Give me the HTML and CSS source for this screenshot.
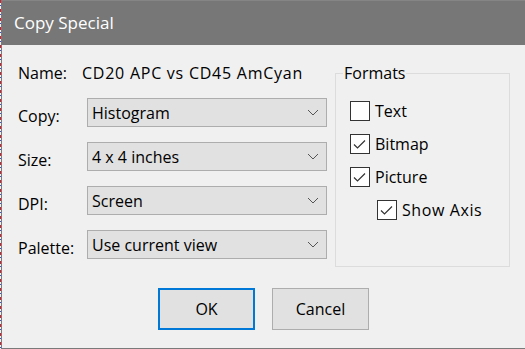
FILE: index.html
```html
<!DOCTYPE html>
<html lang="en">
<head>
    <meta charset="UTF-8">
    <title>Copy Special</title>
    <link rel="stylesheet" href="styles.css">
</head>
<body>
    <div class="dialog">
        <div class="titlebar">Copy Special</div>
        <div class="content">
            <div class="main">
                <div class="settings">
                    <div class="name-row">
                        <span class="name-label">Name:</span>
                        <span class="name-value">CD20 APC vs CD45 AmCyan</span>
                    </div>
                    <div class="field">
                        <span class="label">Copy:</span>
                        <div class="combo"><span>Histogram</span><svg class="chevron" width="12" height="7" viewBox="0 0 12 7"><polyline points="1,1 6,6 11,1"/></svg></div>
                    </div>
                    <div class="field">
                        <span class="label">Size:</span>
                        <div class="combo"><span>4 x 4 inches</span><svg class="chevron" width="12" height="7" viewBox="0 0 12 7"><polyline points="1,1 6,6 11,1"/></svg></div>
                    </div>
                    <div class="field">
                        <span class="label">DPI:</span>
                        <div class="combo"><span>Screen</span><svg class="chevron" width="12" height="7" viewBox="0 0 12 7"><polyline points="1,1 6,6 11,1"/></svg></div>
                    </div>
                    <div class="field">
                        <span class="label">Palette:</span>
                        <div class="combo"><span>Use current view</span><svg class="chevron" width="12" height="7" viewBox="0 0 12 7"><polyline points="1,1 6,6 11,1"/></svg></div>
                    </div>
                </div>
                <fieldset class="formats">
                    <legend>Formats</legend>
                    <div class="check"><span class="box"></span>Text</div>
                    <div class="check"><span class="box"><svg width="18" height="18" viewBox="0 0 18 18"><polyline points="3,9.5 6.5,13 14,5.5"/></svg></span>Bitmap</div>
                    <div class="check"><span class="box"><svg width="18" height="18" viewBox="0 0 18 18"><polyline points="3,9.5 6.5,13 14,5.5"/></svg></span>Picture</div>
                    <div class="check sub"><span class="box"><svg width="18" height="18" viewBox="0 0 18 18"><polyline points="3,9.5 6.5,13 14,5.5"/></svg></span><span class="wide">Show Axis</span></div>
                </fieldset>
            </div>
            <div class="buttons">
                <button class="btn default">OK</button>
                <button class="btn">Cancel</button>
            </div>
        </div>
    </div>
</body>
</html>
```

FILE: styles.css
```css
html, body { margin: 0; padding: 0; }
body {
    font-family: 'Open Sans', 'Noto Sans', sans-serif;
    font-size: 16px;
    color: #000;
    background: repeating-linear-gradient(180deg, #d81e2c 0 3px, #f0f0f0 3px 5px, #3a52c4 5px 6px, #f0f0f0 6px 9px);
    width: 525px;
    height: 349px;
    overflow: hidden;
}
.dialog {
    margin-left: 1px;
    width: 524px;
    height: 349px;
    box-sizing: border-box;
    border-left: 1px solid #7a7a7a;
    border-bottom: 1px solid #7a7a7a;
    background: #f0f0f0;
    display: flex;
    flex-direction: column;
}
.titlebar {
    height: 45px;
    flex: none;
    box-sizing: border-box;
    background: #777777;
    border-top: 1px solid #858585;
    color: #fff;
    font-size: 17px;
    line-height: 22px;
    padding: 11px 0 0 12px;
}
.content { padding: 18px 0 0 16px; }
.main { display: flex; align-items: flex-start; gap: 8px; }
.settings { display: flex; flex-direction: column; gap: 15px; width: 309px; }
.name-row { display: flex; line-height: 20px; height: 20px; }
.name-label { width: 64px; flex: none; }
.name-value { letter-spacing: 0.75px; white-space: nowrap; }
.field { display: flex; align-items: center; }
.label { width: 69px; flex: none; padding-top: 6px; line-height: 20px; }
.combo {
    width: 240px;
    height: 29px;
    box-sizing: border-box;
    border: 1px solid #adadad;
    background: #e1e1e1;
    display: flex;
    align-items: center;
    justify-content: space-between;
    padding: 0 7px 0 4px;
    line-height: 20px;
}
.chevron { fill: none; stroke: #555; stroke-width: 1; }
.formats {
    margin: 0;
    width: 175px;
    box-sizing: border-box;
    border: 1px solid #dcdcdc;
    padding: 18px 0 46px 14px;
    display: flex;
    flex-direction: column;
    gap: 13px;
}
.formats legend {
    padding: 0 1px;
    margin-left: -7px;
    line-height: 20px;
}
.check { display: flex; align-items: center; gap: 5px; height: 20px; line-height: 20px; }
.check.sub { padding-left: 27px; }
.wide { letter-spacing: 0.6px; white-space: nowrap; }
.box {
    width: 20px;
    height: 20px;
    box-sizing: border-box;
    border: 1px solid #333;
    background: #fff;
    flex: none;
}
.box svg { display: block; fill: none; stroke: #333; stroke-width: 1.2; }
.buttons { display: flex; justify-content: center; gap: 17px; margin: 21px 0 0 -16px; }
.btn {
    width: 97px;
    height: 42px;
    box-sizing: border-box;
    border: 1px solid #adadad;
    background: #e1e1e1;
    font-family: inherit;
    font-size: 16px;
    color: #000;
    padding: 0;
}
.btn.default { border: 2px solid #0078d7; }
```
